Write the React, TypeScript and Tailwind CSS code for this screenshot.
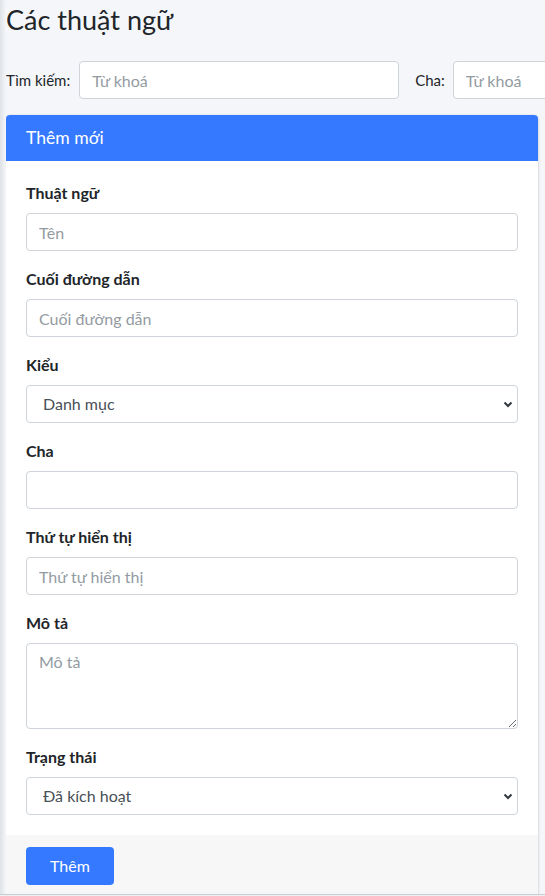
import React from 'react';

const font = "font-['Lato','Roboto','Noto_Sans',sans-serif]";

function Field({ label, children, last }: { label: string; children: React.ReactNode; last?: boolean }) {
  return (
    <div className={last ? '' : 'mb-4'}>
      <label className="block mb-2 text-[16px] leading-6 font-bold text-[#212529]">{label}</label>
      {children}
    </div>
  );
}

const inputCls =
  'block w-full h-[38px] px-3 rounded-[4px] border border-[#ced4da] bg-white text-[16px] text-[#495057] placeholder:text-[#939ba2] outline-none';

function Select({ value }: { value: string }) {
  return (
    <div className="relative">
      <select
        defaultValue={value}
        className={inputCls + ' appearance-none pl-[16px] pr-8 text-[#495057]'}
      >
        <option>{value}</option>
      </select>
      <svg
        className="absolute right-[4px] top-1/2 -translate-y-1/2 pointer-events-none"
        width="12"
        height="12"
        viewBox="0 0 12 12"
      >
        <path d="M2.5 4.5 6 8l3.5-3.5" fill="none" stroke="#343a40" strokeWidth="2" />
      </svg>
    </div>
  );
}

export default function App() {
  return (
    <div className={`${font} relative min-h-[896px] w-full overflow-hidden bg-[#f4f6f9] text-[#212529]`}>
      <div className="fixed left-0 top-0 h-full w-[6px] bg-gradient-to-r from-[#dfe2e6] to-[#f4f6f9]" />
      <div className="pl-[6px]">
        <h1 className="pt-[3px] text-[27px] leading-[34px] font-normal text-[#212529]">Các thuật ngữ</h1>
        <div className="mt-[24px] flex items-center whitespace-nowrap">
          <span className="text-[15px] text-[#212529]">Tìm kiếm:</span>
          <input className={inputCls + ' ml-[9px] !w-[320px] shrink-0 text-[15px]'} placeholder="Từ khoá" />
          <span className="ml-4 text-[15px] text-[#212529]">Cha:</span>
          <input className={inputCls + ' ml-[8px] !w-[200px] shrink-0 text-[15px]'} placeholder="Từ khoá" />
        </div>
      </div>

      <div className="ml-[6px] mr-[7px] mt-4 rounded-[4px] bg-white shadow-[0_0_1px_rgba(0,0,0,0.125),0_1px_3px_rgba(0,0,0,0.2)]">
        <div className="flex h-[46px] items-center rounded-t-[4px] bg-[#3479ff] px-5">
          <h3 className="text-[17.6px] font-normal text-white">Thêm mới</h3>
        </div>
        <div className="p-5">
          <Field label="Thuật ngữ">
            <input className={inputCls} placeholder="Tên" />
          </Field>
          <Field label="Cuối đường dẫn">
            <input className={inputCls} placeholder="Cuối đường dẫn" />
          </Field>
          <Field label="Kiểu">
            <Select value="Danh mục" />
          </Field>
          <Field label="Cha">
            <input className={inputCls} />
          </Field>
          <Field label="Thứ tự hiển thị">
            <input className={inputCls} placeholder="Thứ tự hiển thị" />
          </Field>
          <Field label="Mô tả">
            <textarea
              rows={3}
              className="block h-[86px] w-full rounded-[4px] border border-[#ced4da] px-3 py-[6px] text-[16px] leading-6 text-[#495057] placeholder:text-[#939ba2] outline-none"
              placeholder="Mô tả"
            />
          </Field>
          <Field label="Trạng thái" last>
            <Select value="Đã kích hoạt" />
          </Field>
        </div>
        <div className="rounded-b-[4px] bg-[#f7f7f7] px-5 py-3">
          <button className="h-[38px] w-[88px] rounded-[4px] bg-[#3479ff] text-[16px] text-white">Thêm</button>
        </div>
      </div>
      <div className="fixed bottom-0 left-0 h-[2px] w-full border-t border-[#c8cdd2] bg-[#eef0f3]" />
    </div>
  );
}
